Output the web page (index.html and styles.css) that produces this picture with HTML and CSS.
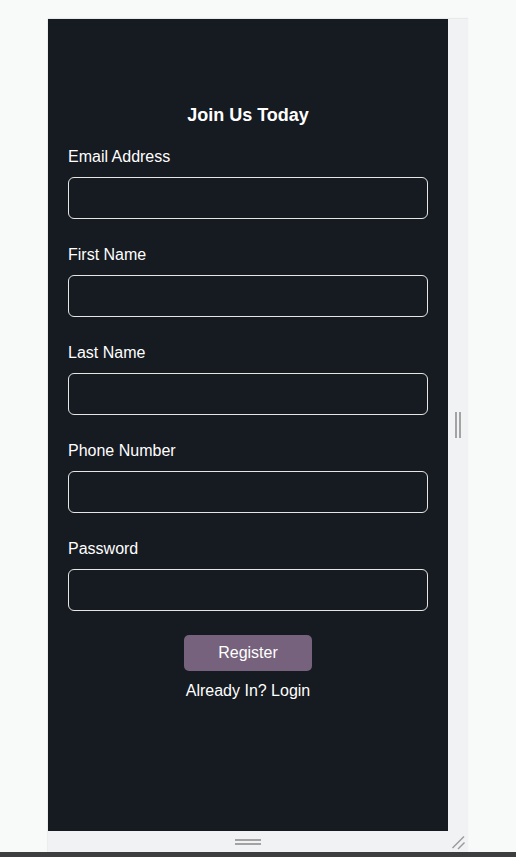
FILE: index.html
```html
<!DOCTYPE html>
<html lang="en">
<head>
<meta charset="utf-8">
<title>Join Us Today</title>
<link rel="stylesheet" href="styles.css">
</head>
<body>
<div class="frame">
  <main class="panel">
    <h1 class="title">Join Us Today</h1>
    <form class="form">
      <label class="field">
        <span class="label">Email Address</span>
        <input class="input" type="email">
      </label>
      <label class="field">
        <span class="label">First Name</span>
        <input class="input" type="text">
      </label>
      <label class="field">
        <span class="label">Last Name</span>
        <input class="input" type="text">
      </label>
      <label class="field">
        <span class="label">Phone Number</span>
        <input class="input" type="tel">
      </label>
      <label class="field">
        <span class="label">Password</span>
        <input class="input" type="password">
      </label>
      <div class="actions">
        <button class="btn" type="button">Register</button>
        <a class="login" href="#">Already In? Login</a>
      </div>
    </form>
  </main>
  <div class="vstrip"><span class="vgrip"></span></div>
  <div class="hstrip"><span class="hgrip"></span></div>
  <div class="corner">
    <svg width="20" height="21" viewBox="0 0 20 21">
      <line x1="4.5" y1="17" x2="16" y2="5.5" stroke="#9a9a9a" stroke-width="1.4"/>
      <line x1="10" y1="18" x2="16.5" y2="11.5" stroke="#9a9a9a" stroke-width="1.4"/>
    </svg>
  </div>
</div>
<div class="bottombar"></div>
</body>
</html>
```

FILE: styles.css
```css
html, body {
  margin: 0;
  padding: 0;
  overflow: hidden;
}
body {
  background: #f8f9f9;
  padding-top: 19px;
  font-family: "Liberation Sans", Arial, sans-serif;
}
.frame {
  margin-left: 48px;
  width: 420px;
  display: grid;
  grid-template-columns: 400px 20px;
  grid-template-rows: 812px 21px;
  box-shadow: 0 -1px 1px rgba(0, 0, 0, 0.06), -1px 0 1px rgba(0, 0, 0, 0.04);
}
.panel {
  background: #161a21;
  color: #ffffff;
  padding: 85px 20px 0 20px;
  box-sizing: border-box;
}
.title {
  margin: 0;
  font-size: 18px;
  line-height: 22px;
  font-weight: bold;
  text-align: center;
}
.form {
  margin-top: 22px;
  display: flex;
  flex-direction: column;
  gap: 27px;
}
.field {
  display: flex;
  flex-direction: column;
  gap: 11px;
}
.label {
  font-size: 16px;
  line-height: 18px;
}
.input {
  height: 42px;
  margin: 0;
  box-sizing: border-box;
  background: #161a21;
  border: 1px solid #e6e6e6;
  border-radius: 6px;
  color: #fff;
  font: inherit;
  padding: 0 10px;
}
.actions {
  margin-top: -3px;
  display: flex;
  flex-direction: column;
  align-items: center;
  gap: 11px;
}
.btn {
  width: 128px;
  height: 36px;
  background: #76627c;
  color: #fff;
  border: none;
  border-radius: 5px;
  font-family: "Liberation Sans", Arial, sans-serif;
  font-size: 16px;
  line-height: 18px;
  padding: 0;
}
.login {
  color: #fff;
  text-decoration: none;
  font-size: 16px;
  line-height: 18px;
}
.vstrip {
  background: #f1f2f4;
  display: flex;
  align-items: center;
  justify-content: center;
}
.vgrip {
  width: 2px;
  height: 26px;
  border-left: 2px solid #a3a3a3;
  border-right: 2px solid #a3a3a3;
}
.hstrip {
  background: #f1f2f4;
  display: flex;
  align-items: center;
  justify-content: center;
}
.hgrip {
  width: 26px;
  height: 2px;
  border-top: 2px solid #a3a3a3;
  border-bottom: 2px solid #a3a3a3;
}
.corner {
  background: #f1f2f4;
  display: flex;
}
.bottombar {
  height: 5px;
  background: #3d3e40;
}
```
